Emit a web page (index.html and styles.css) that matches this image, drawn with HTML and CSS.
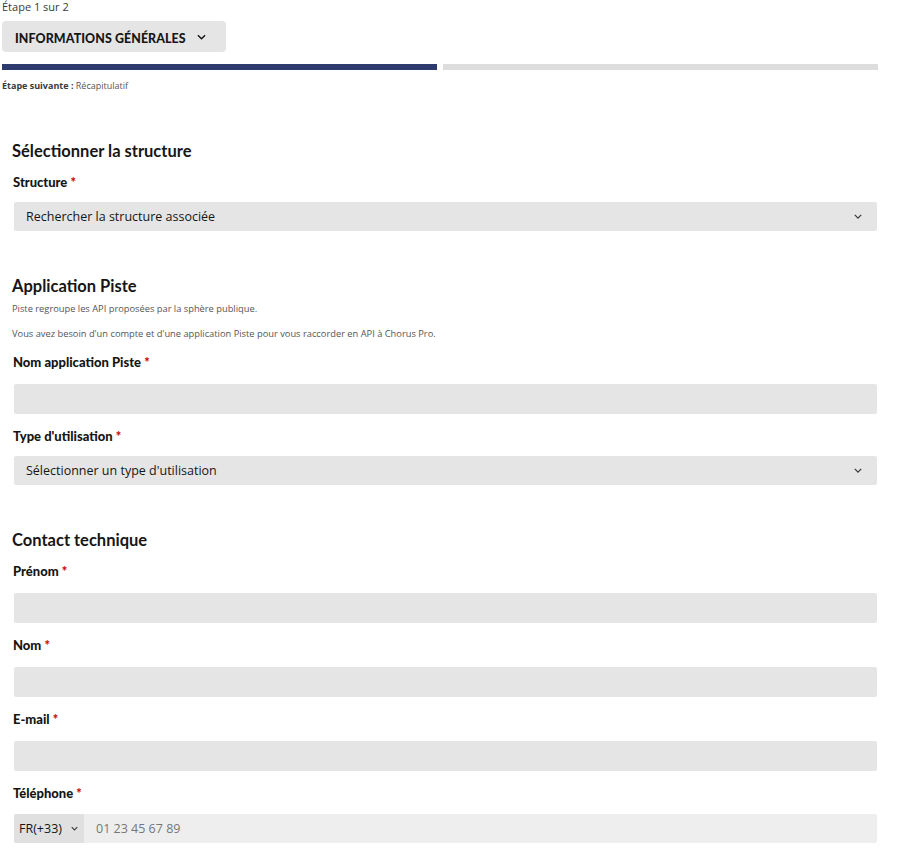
FILE: index.html
```html
<!DOCTYPE html>
<html lang="fr">
<head>
<meta charset="utf-8">
<title>Étape 1 sur 2</title>
<link rel="stylesheet" href="styles.css">
</head>
<body>
<div class="stepper">
  <p class="step-count">Étape 1 sur 2</p>
  <button class="step-btn" type="button">INFORMATIONS GÉNÉRALES
    <svg class="chev chev-dark" viewBox="0 0 10 6" width="9" height="6"><path d="M1 1l4 4 4-4" fill="none" stroke="currentColor" stroke-width="1.6"/></svg>
  </button>
  <div class="bars"><span class="bar bar-on"></span><span class="bar"></span></div>
  <p class="next"><b>Étape suivante :</b> Récapitulatif</p>
</div>

<form class="form">
  <section class="section">
    <h2 class="title">Sélectionner la structure</h2>
    <div class="field">
      <label class="label">Structure <span class="req">*</span></label>
      <div class="select"><span>Rechercher la structure associée</span>
        <svg class="chev" viewBox="0 0 10 6" width="8" height="5"><path d="M1 1l4 4 4-4" fill="none" stroke="currentColor" stroke-width="1.6"/></svg>
      </div>
    </div>
  </section>

  <section class="section">
    <h2 class="title">Application Piste</h2>
    <p class="hint">Piste regroupe les API proposées par la sphère publique.</p>
    <p class="hint hint2">Vous avez besoin d'un compte et d'une application Piste pour vous raccorder en API à Chorus Pro.</p>
    <div class="field">
      <label class="label">Nom application Piste <span class="req">*</span></label>
      <div class="input"></div>
    </div>
    <div class="field">
      <label class="label">Type d'utilisation <span class="req">*</span></label>
      <div class="select"><span>Sélectionner un type d'utilisation</span>
        <svg class="chev" viewBox="0 0 10 6" width="8" height="5"><path d="M1 1l4 4 4-4" fill="none" stroke="currentColor" stroke-width="1.6"/></svg>
      </div>
    </div>
  </section>

  <section class="section">
    <h2 class="title">Contact technique</h2>
    <div class="field">
      <label class="label">Prénom <span class="req">*</span></label>
      <div class="input"></div>
    </div>
    <div class="field">
      <label class="label">Nom <span class="req">*</span></label>
      <div class="input"></div>
    </div>
    <div class="field">
      <label class="label">E-mail <span class="req">*</span></label>
      <div class="input"></div>
    </div>
    <div class="field">
      <label class="label">Téléphone <span class="req">*</span></label>
      <div class="phone">
        <div class="prefix">FR(+33)
          <svg class="chev" viewBox="0 0 10 6" width="7" height="5"><path d="M1 1l4 4 4-4" fill="none" stroke="currentColor" stroke-width="1.6"/></svg>
        </div>
        <div class="phone-num">01 23 45 67 89</div>
      </div>
    </div>
  </section>
</form>
</body>
</html>
```

FILE: styles.css
```css
* { box-sizing: border-box; }
html, body { margin: 0; padding: 0; background: #fff; }
body {
  font-family: "Open Sans", "Noto Sans", Arial, sans-serif;
  color: #161616;
  width: 897px;
}
.stepper { padding: 0 19px 0 2px; }
.step-count {
  margin: 0;
  font-size: 11px;
  line-height: 14px;
  color: #3a3a3a;
}
.step-btn {
  margin-top: 7px;
  display: flex;
  align-items: center;
  gap: 11px;
  height: 31px;
  width: 224px;
  padding: 3px 0 0 13px;
  border: 0;
  border-radius: 4px;
  background: #e5e5e5;
  font-family: "Lato", "Open Sans", sans-serif;
  font-weight: 900;
  font-size: 12.4px;
  letter-spacing: 0.1px;
  color: #161616;
}
.step-btn .chev { margin-top: -2px; }
.chev { display: block; color: #3a3a3a; }
.chev-dark { color: #161616; }
.bars { display: flex; gap: 6px; margin-top: 12px; }
.bar { flex: 1; height: 6px; background: #dddddd; }
.bar-on { background: #2e3b6e; }
.next {
  margin: 9px 0 0;
  font-size: 9px;
  line-height: 14px;
  color: #555;
}
.next b { color: #3a3a3a; font-weight: 700; }

.form { padding: 0 20px 0 12px; margin-top: 50px; }
.section { margin-bottom: 47px; }
.title {
  margin: 0;
  font-family: "Lato", "Open Sans", sans-serif;
  font-weight: 700;
  font-size: 16.5px;
  line-height: 16px;
  color: #161616;
}
.hint {
  margin: 8px 0 0;
  font-size: 9.3px;
  line-height: 13px;
  color: #555;
}
.hint2 { margin-top: 12px; }
.field { padding-left: 2px; margin-top: 14px; }
.section > .title + .field { margin-top: 15px; }
.label {
  display: block;
  font-family: "Lato", "Open Sans", sans-serif;
  font-weight: 900;
  font-size: 13px;
  line-height: 16px;
  color: #161616;
  margin-left: -1px;
}
.req { color: #ce0500; }
.select, .input, .phone {
  margin-top: 14px;
  height: 30px;
  border-radius: 2px;
  background: #e5e5e5;
}
.select {
  margin-top: 12px;
  height: 29px;
  display: flex;
  align-items: center;
  justify-content: space-between;
  padding: 0 15px 0 12px;
  font-size: 12.5px;
  color: #161616;
}
.phone { display: flex; background: #eeeeee; overflow: hidden; margin-top: 13px; height: 29px; }
.prefix {
  display: flex;
  align-items: center;
  gap: 9px;
  width: 70px;
  padding-left: 5px;
  background: #e0e0e0;
  font-size: 12.5px;
  color: #161616;
}
.phone-num {
  display: flex;
  align-items: center;
  padding-left: 12px;
  font-size: 12.5px;
  color: #777;
}
```
